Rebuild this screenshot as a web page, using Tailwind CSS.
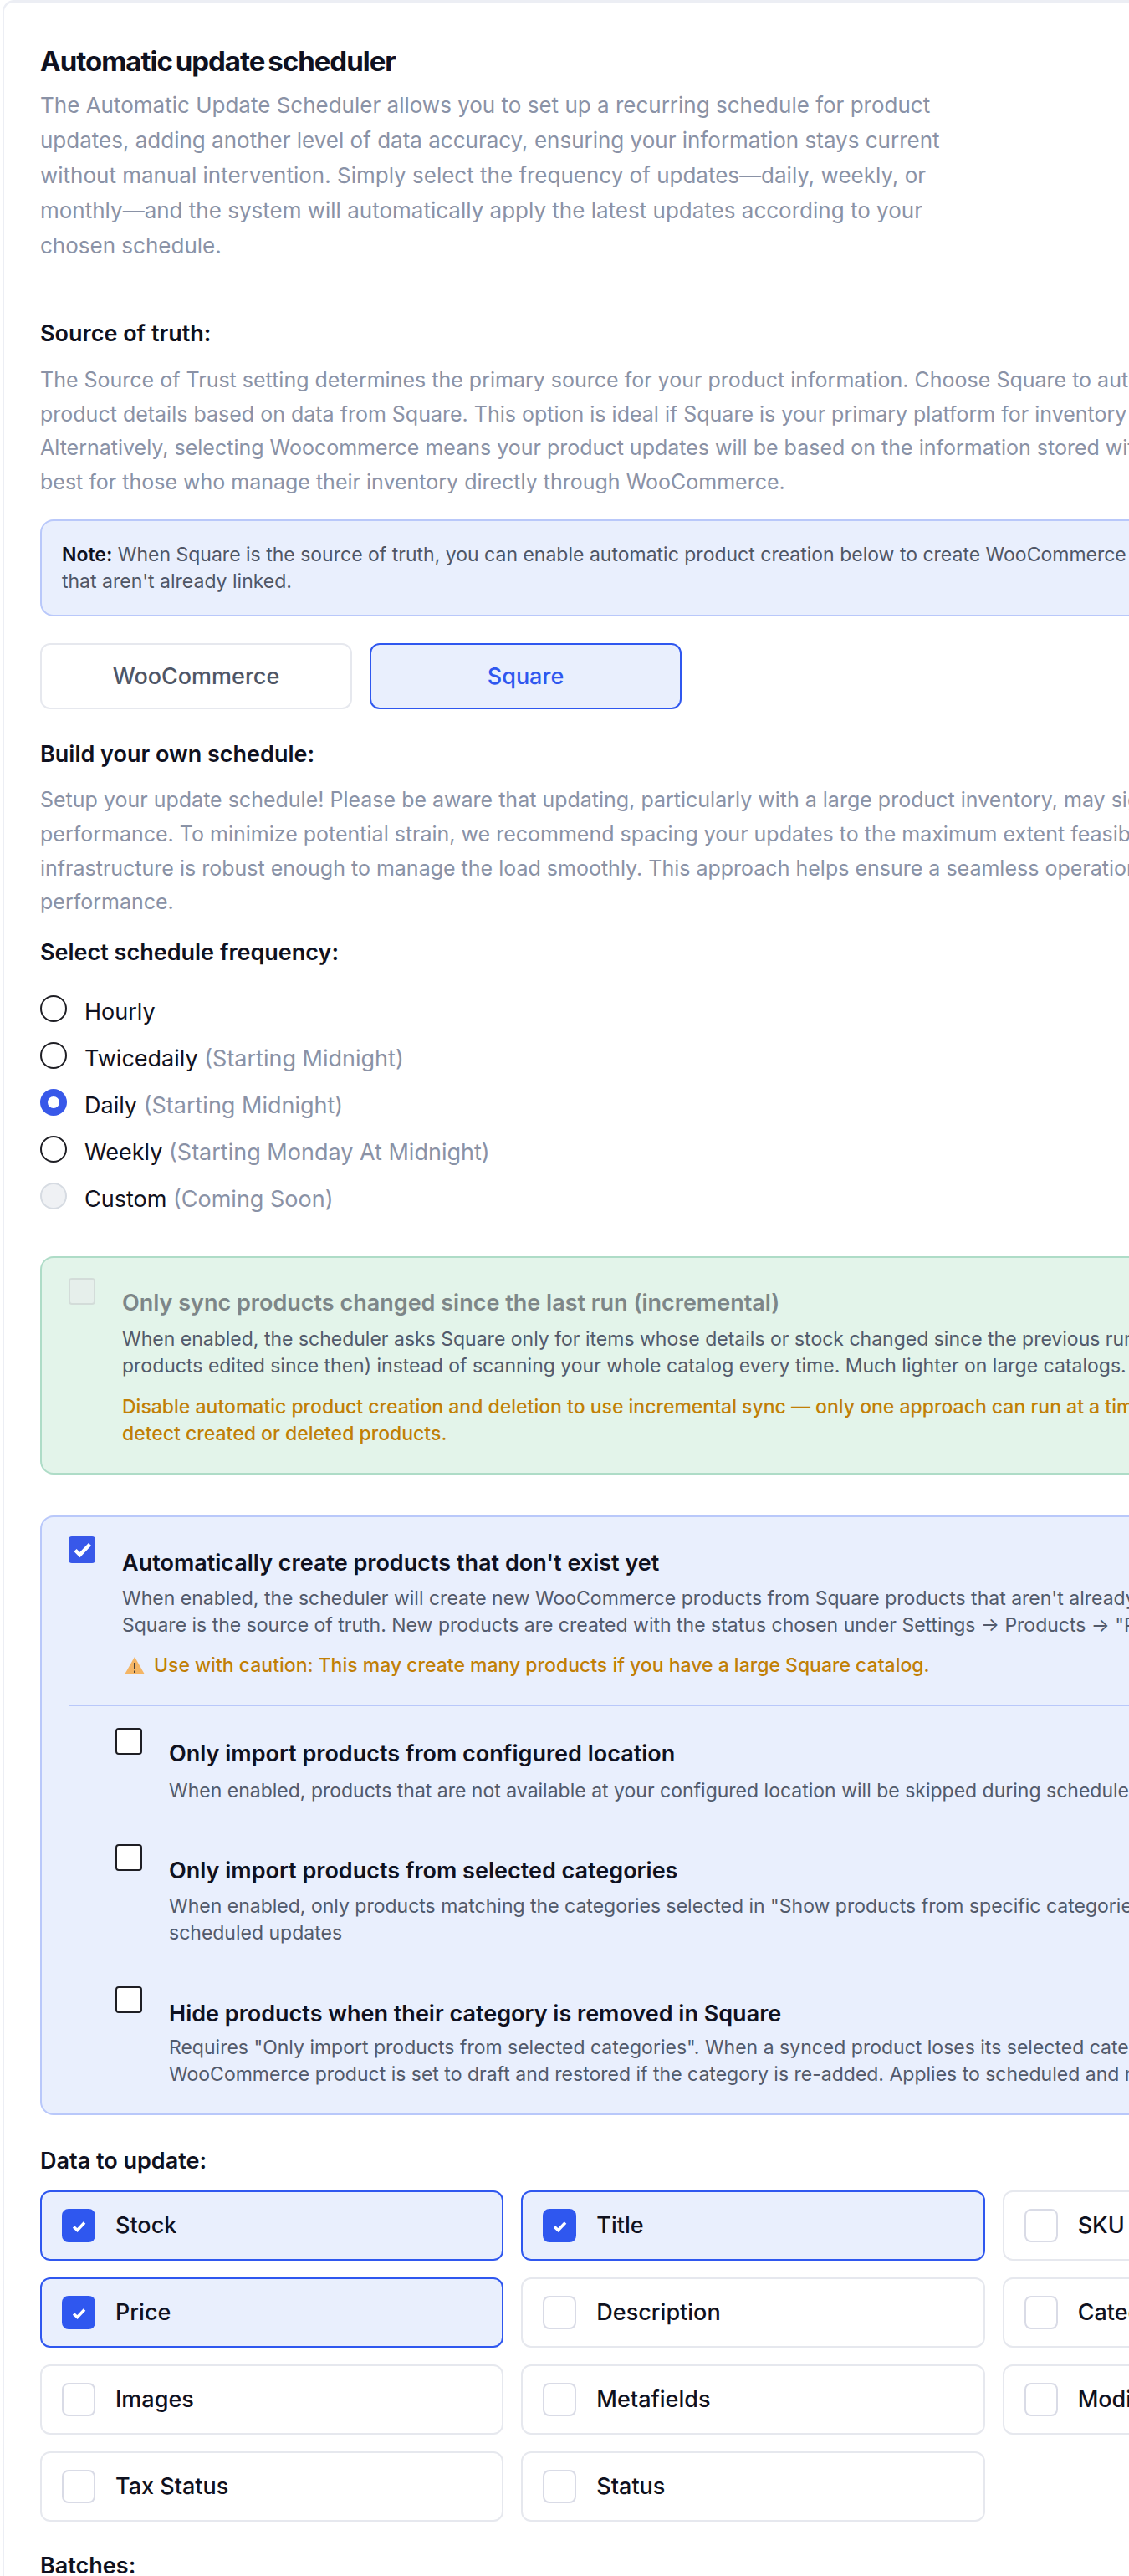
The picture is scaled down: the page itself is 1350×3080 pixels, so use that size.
<!DOCTYPE html>
<html lang="en">
<head>
  <meta charset="UTF-8" />
  <title>Automatic update scheduler</title>
  <script src="https://cdn.jsdelivr.net/npm/@tailwindcss/browser@4"></script>
</head>
<body class="bg-white h-[3080px] overflow-hidden font-['Inter',sans-serif] text-[#0f1120]">
  <div class="ml-[3px] w-[1802px] h-[3080px] bg-white border-t-[3px] border-l-2 border-[#eceef4] rounded-tl-[14px] pl-[43px] pt-[48px]">
    <div class="w-[1705px]">

      <!-- Intro -->
      <h1 class="text-[33px] leading-[44px] font-bold tracking-[-1px] [word-spacing:-3px]">Automatic update scheduler</h1>
      <p class="mt-[10px] text-[26px] leading-[42px] text-[#8a92a6]">
        The Automatic Update Scheduler allows you to set up a recurring schedule for product<br>
        updates, adding another level of data accuracy, ensuring your information stays current<br>
        without manual intervention. Simply select the frequency of updates—daily, weekly, or<br>
        monthly—and the system will automatically apply the latest updates according to your<br>
        chosen schedule.
      </p>

      <!-- Source of truth -->
      <h2 class="mt-[66px] text-[27px] leading-[36px] font-semibold">Source of truth:</h2>
      <p class="mt-[17px] text-[25px] leading-[40.6px] text-[#8a92a6] whitespace-nowrap">
        The Source of Trust setting determines the primary source for your product information. Choose Square to automatically update<br>
        product details based on data from Square. This option is ideal if Square is your primary platform for inventory management.<br>
        Alternatively, selecting Woocommerce means your product updates will be based on the information stored within your store, which is<br>
        best for those who manage their inventory directly through WooCommerce.
      </p>
      <div class="mt-[25px] border-2 border-[#b9c8fa] bg-[#e9effd] rounded-[16px] px-6 py-6 text-[23px] leading-[32px] text-[#4f5666] whitespace-nowrap">
        <b class="font-semibold text-[#0f1120]">Note:</b> When Square is the source of truth, you can enable automatic product creation below to create WooCommerce products from Square items<br>
        that aren't already linked.
      </div>
      <div class="mt-[32px] flex gap-[21px]">
        <div class="w-[373px] h-[79px] flex items-center justify-center border-2 border-[#e6e8ee] rounded-[12px] bg-white text-[27px] font-medium text-[#4f5666]">WooCommerce</div>
        <div class="w-[373px] h-[79px] flex items-center justify-center border-2 border-[#2f57ef] rounded-[12px] bg-[#e9effd] text-[27px] font-medium text-[#2f57ef]">Square</div>
      </div>

      <!-- Schedule -->
      <h2 class="mt-[36px] text-[27px] leading-[36px] font-semibold">Build your own schedule:</h2>
      <p class="mt-[16px] text-[25px] leading-[40.6px] text-[#8a92a6] whitespace-nowrap">
        Setup your update schedule! Please be aware that updating, particularly with a large product inventory, may significantly impact your site's<br>
        performance. To minimize potential strain, we recommend spacing your updates to the maximum extent feasible, unless you are sure your<br>
        infrastructure is robust enough to manage the load smoothly. This approach helps ensure a seamless operation without compromising<br>
        performance.
      </p>
      <h2 class="mt-[22px] text-[27px] leading-[36px] font-semibold">Select schedule frequency:</h2>
      <div class="mt-[25px] text-[27px] leading-[36px]">
        <div class="h-14 flex items-center gap-[21px]">
          <span class="w-8 h-8 mb-2 rounded-full border-2 border-[#1e1e24] bg-white"></span>
          <span>Hourly</span>
        </div>
        <div class="h-14 flex items-center gap-[21px]">
          <span class="w-8 h-8 mb-2 rounded-full border-2 border-[#1e1e24] bg-white"></span>
          <span>Twicedaily <span class="text-[#8a92a6]">(Starting Midnight)</span></span>
        </div>
        <div class="h-14 flex items-center gap-[21px]">
          <span class="w-8 h-8 mb-2 rounded-full border-[9px] border-[#3858e9] bg-white"></span>
          <span>Daily <span class="text-[#8a92a6]">(Starting Midnight)</span></span>
        </div>
        <div class="h-14 flex items-center gap-[21px]">
          <span class="w-8 h-8 mb-2 rounded-full border-2 border-[#1e1e24] bg-white"></span>
          <span>Weekly <span class="text-[#8a92a6]">(Starting Monday At Midnight)</span></span>
        </div>
        <div class="h-14 flex items-center gap-[21px]">
          <span class="w-8 h-8 mb-2 rounded-full border-2 border-[#d6dbe2] bg-[#eff1f4]"></span>
          <span>Custom <span class="text-[#8a92a6]">(Coming Soon)</span></span>
        </div>
      </div>

      <!-- Incremental sync -->
      <div class="mt-[40px] h-[261px] flex gap-8 border-2 border-[#aedcc7] bg-[#e3f4ea] rounded-[16px] pl-[32px] pt-[24px]">
        <span class="w-8 h-8 shrink-0 rounded-[4px] border-2 border-[#d3dcd9] bg-[#e6efeb]"></span>
        <div class="whitespace-nowrap">
          <div class="mt-[12px] text-[27px] leading-[36px] font-semibold text-[#7d8688]">Only sync products changed since the last run (incremental)</div>
          <p class="mt-[9px] text-[23px] leading-[32px] text-[#525a6b]">
            When enabled, the scheduler asks Square only for items whose details or stock changed since the previous run (plus any<br>
            products edited since then) instead of scanning your whole catalog every time. Much lighter on large catalogs.
          </p>
          <p class="mt-[17px] text-[23px] leading-[32px] font-medium text-[#c17f06]">
            Disable automatic product creation and deletion to use incremental sync — only one approach can run at a time, and it cannot<br>
            detect created or deleted products.
          </p>
        </div>
      </div>

      <!-- Auto create -->
      <div class="mt-[49px] h-[717px] border-2 border-[#b9c8fa] bg-[#e9effd] rounded-[16px] pl-[32px] pt-[23px]">
        <div class="flex gap-8 whitespace-nowrap">
          <svg class="w-8 h-8 shrink-0 rounded-[4px] bg-[#3858e9]" viewBox="0 0 32 32" fill="none" stroke="#fff" stroke-width="4.500"><path d="M8 16.500L13.500 22L25.500 9.500"/></svg>
          <div>
            <div class="mt-[14px] text-[27px] leading-[36px] font-semibold">Automatically create products that don't exist yet</div>
            <p class="mt-[8px] text-[23px] leading-[32px] text-[#525a6b]">
              When enabled, the scheduler will create new WooCommerce products from Square products that aren't already linked when<br>
              Square is the source of truth. New products are created with the status chosen under Settings → Products → "Product status".
            </p>
            <p class="mt-[16px] flex items-center gap-[11px] text-[23px] leading-[32px] font-medium text-[#c17f06]">
              <svg class="w-6 h-6 ml-[3px]" viewBox="0 0 24 24"><path d="M12 2L24 23H0z" fill="#f4b565"/><rect x="11" y="9" width="2" height="8" fill="#4a4036"/><rect x="11" y="18.500" width="2" height="2.500" fill="#4a4036"/></svg>
              Use with caution: This may create many products if you have a large Square catalog.
            </p>
          </div>
        </div>
        <div class="mt-[31px] border-t-2 border-[#b9c8fa]"></div>

        <div class="mt-[26px] ml-[56px] flex gap-8 whitespace-nowrap">
          <span class="w-8 h-8 shrink-0 rounded-[4px] border-2 border-[#1e1e24] bg-white"></span>
          <div>
            <div class="mt-[13px] text-[27px] leading-[36px] font-semibold">Only import products from configured location</div>
            <p class="mt-[10px] text-[23px] leading-[32px] text-[#525a6b]">When enabled, products that are not available at your configured location will be skipped during scheduled updates</p>
          </div>
        </div>
        <div class="mt-[48px] ml-[56px] flex gap-8 whitespace-nowrap">
          <span class="w-8 h-8 shrink-0 rounded-[4px] border-2 border-[#1e1e24] bg-white"></span>
          <div>
            <div class="mt-[14px] text-[27px] leading-[36px] font-semibold">Only import products from selected categories</div>
            <p class="mt-[8px] text-[23px] leading-[32px] text-[#525a6b]">
              When enabled, only products matching the categories selected in "Show products from specific categories" will be imported during<br>
              scheduled updates
            </p>
          </div>
        </div>
        <div class="mt-[48px] ml-[56px] flex gap-8 whitespace-nowrap">
          <span class="w-8 h-8 shrink-0 rounded-[4px] border-2 border-[#1e1e24] bg-white"></span>
          <div>
            <div class="mt-[15px] text-[27px] leading-[36px] font-semibold">Hide products when their category is removed in Square</div>
            <p class="mt-[6px] text-[23px] leading-[32px] text-[#525a6b]">
              Requires "Only import products from selected categories". When a synced product loses its selected category, the linked<br>
              WooCommerce product is set to draft and restored if the category is re-added. Applies to scheduled and manual updates.
            </p>
          </div>
        </div>
      </div>

      <!-- Data to update -->
      <h2 class="mt-[37px] text-[27px] leading-[36px] font-semibold">Data to update:</h2>
      <div class="mt-[17px] grid grid-cols-3 gap-x-[21px] gap-y-5 text-[27px] font-medium">
        <div class="h-[84px] flex items-center gap-[24px] pl-6 border-2 border-[#2f57ef] bg-[#e9effd] rounded-[12px]">
          <svg class="w-10 h-10 rounded-[8px] bg-[#2f57ef]" viewBox="0 0 40 40" fill="none" stroke="#fff" stroke-width="3.500"><path d="M14 21.500L18.500 25.500L27 16.500"/></svg>Stock
        </div>
        <div class="h-[84px] flex items-center gap-[24px] pl-6 border-2 border-[#2f57ef] bg-[#e9effd] rounded-[12px]">
          <svg class="w-10 h-10 rounded-[8px] bg-[#2f57ef]" viewBox="0 0 40 40" fill="none" stroke="#fff" stroke-width="3.500"><path d="M14 21.500L18.500 25.500L27 16.500"/></svg>Title
        </div>
        <div class="h-[84px] flex items-center gap-[24px] pl-6 border-2 border-[#e6e8ee] rounded-[12px]">
          <span class="w-10 h-10 rounded-[8px] border-2 border-[#d9dbe6] bg-white"></span>SKU
        </div>
        <div class="h-[84px] flex items-center gap-[24px] pl-6 border-2 border-[#2f57ef] bg-[#e9effd] rounded-[12px]">
          <svg class="w-10 h-10 rounded-[8px] bg-[#2f57ef]" viewBox="0 0 40 40" fill="none" stroke="#fff" stroke-width="3.500"><path d="M14 21.500L18.500 25.500L27 16.500"/></svg>Price
        </div>
        <div class="h-[84px] flex items-center gap-[24px] pl-6 border-2 border-[#e6e8ee] rounded-[12px]">
          <span class="w-10 h-10 rounded-[8px] border-2 border-[#d9dbe6] bg-white"></span>Description
        </div>
        <div class="h-[84px] flex items-center gap-[24px] pl-6 border-2 border-[#e6e8ee] rounded-[12px]">
          <span class="w-10 h-10 rounded-[8px] border-2 border-[#d9dbe6] bg-white"></span>Categories
        </div>
        <div class="h-[84px] flex items-center gap-[24px] pl-6 border-2 border-[#e6e8ee] rounded-[12px]">
          <span class="w-10 h-10 rounded-[8px] border-2 border-[#d9dbe6] bg-white"></span>Images
        </div>
        <div class="h-[84px] flex items-center gap-[24px] pl-6 border-2 border-[#e6e8ee] rounded-[12px]">
          <span class="w-10 h-10 rounded-[8px] border-2 border-[#d9dbe6] bg-white"></span>Metafields
        </div>
        <div class="h-[84px] flex items-center gap-[24px] pl-6 border-2 border-[#e6e8ee] rounded-[12px]">
          <span class="w-10 h-10 rounded-[8px] border-2 border-[#d9dbe6] bg-white"></span>Modifiers
        </div>
        <div class="h-[84px] flex items-center gap-[24px] pl-6 border-2 border-[#e6e8ee] rounded-[12px]">
          <span class="w-10 h-10 rounded-[8px] border-2 border-[#d9dbe6] bg-white"></span>Tax Status
        </div>
        <div class="h-[84px] flex items-center gap-[24px] pl-6 border-2 border-[#e6e8ee] rounded-[12px]">
          <span class="w-10 h-10 rounded-[8px] border-2 border-[#d9dbe6] bg-white"></span>Status
        </div>
      </div>

      <h2 class="mt-[35px] text-[27px] leading-[36px] font-semibold">Batches:</h2>
    </div>
  </div>
</body>
</html>
